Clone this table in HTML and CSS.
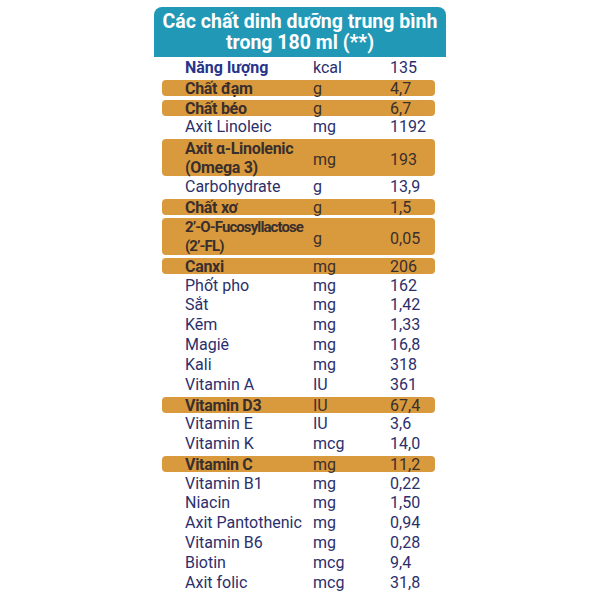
FILE: index.html
```html
<!DOCTYPE html>
<html lang="vi">
<head>
<meta charset="utf-8">
<title>Các chất dinh dưỡng trung bình</title>
<link rel="stylesheet" href="styles.css">
</head>
<body>
<div class="panel">
  <div class="head">Các chất dinh dưỡng trung bình<br>trong 180 ml (**)</div>
  <div class="table">
    <div class="row strong"><span class="name">Năng lượng</span><span>kcal</span><span>135</span></div>
    <div class="row hl"><span class="name">Chất đạm</span><span>g</span><span>4,7</span></div>
    <div class="row hl"><span class="name">Chất béo</span><span>g</span><span>6,7</span></div>
    <div class="row"><span class="name">Axit Linoleic</span><span>mg</span><span>1192</span></div>
    <div class="row hl dbl"><span class="name">Axit α-Linolenic<br>(Omega 3)</span><span class="low">mg</span><span class="low">193</span></div>
    <div class="row"><span class="name">Carbohydrate</span><span>g</span><span>13,9</span></div>
    <div class="row hl"><span class="name">Chất xơ</span><span>g</span><span>1,5</span></div>
    <div class="row hl dbl"><span class="name tight">2’-O-Fucosyllactose<br>(2’-FL)</span><span class="low">g</span><span class="low">0,05</span></div>
    <div class="row hl"><span class="name">Canxi</span><span>mg</span><span>206</span></div>
    <div class="row"><span class="name">Phốt pho</span><span>mg</span><span>162</span></div>
    <div class="row"><span class="name">Sắt</span><span>mg</span><span>1,42</span></div>
    <div class="row"><span class="name">Kẽm</span><span>mg</span><span>1,33</span></div>
    <div class="row"><span class="name">Magiê</span><span>mg</span><span>16,8</span></div>
    <div class="row"><span class="name">Kali</span><span>mg</span><span>318</span></div>
    <div class="row"><span class="name">Vitamin A</span><span>IU</span><span>361</span></div>
    <div class="row hl"><span class="name">Vitamin D3</span><span>IU</span><span>67,4</span></div>
    <div class="row"><span class="name">Vitamin E</span><span>IU</span><span>3,6</span></div>
    <div class="row"><span class="name">Vitamin K</span><span>mcg</span><span>14,0</span></div>
    <div class="row hl"><span class="name">Vitamin C</span><span>mg</span><span>11,2</span></div>
    <div class="row"><span class="name">Vitamin B1</span><span>mg</span><span>0,22</span></div>
    <div class="row"><span class="name">Niacin</span><span>mg</span><span>1,50</span></div>
    <div class="row"><span class="name">Axit Pantothenic</span><span>mg</span><span>0,94</span></div>
    <div class="row"><span class="name">Vitamin B6</span><span>mg</span><span>0,28</span></div>
    <div class="row"><span class="name">Biotin</span><span>mcg</span><span>9,4</span></div>
    <div class="row"><span class="name">Axit folic</span><span>mcg</span><span>31,8</span></div>
  </div>
</div>
</body>
</html>
```

FILE: styles.css
```css
html, body {
  margin: 0;
  padding: 0;
  background: #ffffff;
}

body {
  font-family: Roboto, "Noto Sans", sans-serif;
  color: #2b2f6c;
}

.panel {
  width: 292px;
  margin: 7px 0 0 154px;
}

.head {
  background: #2198b6;
  color: #ffffff;
  border-radius: 8px 8px 0 0;
  font-weight: 700;
  font-size: 19.5px;
  line-height: 21px;
  text-align: center;
  padding: 4px 0 4px;
  height: 42px;
}

.table {
  display: flex;
  flex-direction: column;
  padding: 1px 11px 0 8px;
}

.row {
  display: grid;
  grid-template-columns: 128px 77px 1fr;
  align-items: center;
  padding-left: 23px;
  height: 19.8px;
  font-size: 16px;
  line-height: 18px;
  white-space: nowrap;
}

.row.strong .name {
  font-weight: 700;
  color: #28338a;
}

.row.hl {
  height: 16px;
  margin: 2px 0 1.8px;
  background: #d99a3d;
  border-radius: 4px;
  color: #3a2f2c;
}

.row.hl .name {
  font-weight: 700;
  letter-spacing: -0.3px;
}

.row.hl .name.tight {
  font-size: 15px;
  letter-spacing: -0.9px;
}

.row.hl.dbl {
  height: 37px;
  margin: 1.5px 0 1.1px;
  line-height: 19px;
}

.low {
  padding-top: 4px;
}
```
